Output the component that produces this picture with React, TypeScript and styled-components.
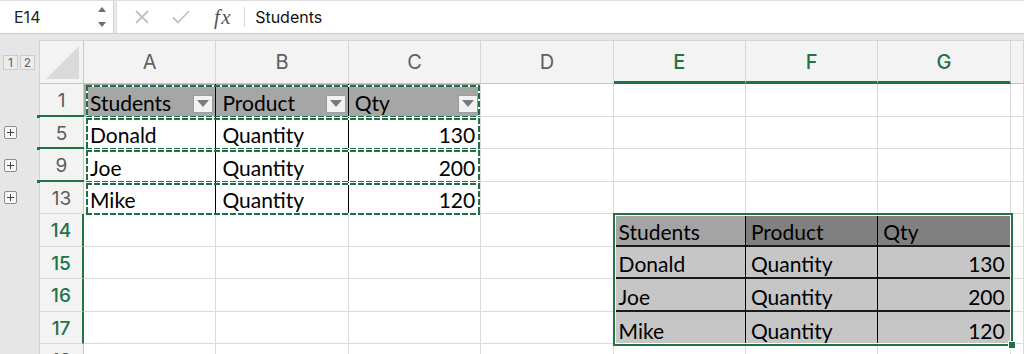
import React from "react";
import styled, { createGlobalStyle } from "styled-components";

const GREEN = "#217346";

const Global = createGlobalStyle`
  html, body { margin: 0; padding: 0; background: #fff; overflow: hidden; }
  body { width: 1024px; height: 354px; font-family: Inter, "Liberation Sans", sans-serif; }
  * { box-sizing: border-box; }
`;

const Page = styled.div`
  width: 1024px;
  height: 354px;
  overflow: hidden;
  display: flex;
  flex-direction: column;
  background: #e6e6e6;
`;

/* ---------- formula bar ---------- */
const FormulaBar = styled.div`
  flex: none;
  height: 34px;
  display: flex;
  background: #fff;
  border-top: 1px solid #dedede;
  border-bottom: 1px solid #cdcdcd;
`;

const NameBox = styled.div`
  width: 114px;
  display: flex;
  align-items: center;
  justify-content: space-between;
  padding: 0 6px 0 14px;
  border-right: 1px solid #d0d0d0;
  font-size: 16px;
  color: #222;
`;

const BarGap = styled.div`
  width: 3px;
  background: #ececec;
  border-right: 1px solid #dcdcdc;
`;

const FormulaArea = styled.div`
  flex: 1;
  display: flex;
  align-items: center;
`;

const BarIcon = styled.span<{ $ml: number }>`
  display: flex;
  align-items: center;
  margin-left: ${(p) => p.$ml}px;
`;

const Fx = styled.span`
  margin-left: 24px;
  font-family: "Liberation Serif", "DejaVu Serif", serif;
  font-style: italic;
  font-size: 21px;
  color: #555;
  letter-spacing: 1.5px;
`;

const BarDivider = styled.span`
  width: 1px;
  height: 20px;
  background: #d6d6d6;
  margin-left: 12px;
`;

const FormulaText = styled.span`
  margin-left: 10px;
  font-size: 16px;
  color: #111;
`;

const Band = styled.div`
  flex: none;
  height: 6px;
  background: #e6e6e6;
`;

/* ---------- sheet ---------- */
const Sheet = styled.div`
  flex: none;
  display: grid;
  grid-template-columns: 40px 44px repeat(7, 132.4px) 1fr;
  grid-template-rows: 44px repeat(9, 32.5px);
  background: #fff;
`;

const OutlineCell = styled.div<{ $top?: boolean }>`
  background: #e6e6e6;
  border-right: 1px solid #d2d2d2;
  display: flex;
  align-items: ${(p) => (p.$top ? "flex-start" : "center")};
  gap: 2px;
  padding: ${(p) => (p.$top ? "15px 0 0 3px" : "0 0 0 4px")};
`;

const LevelButton = styled.span`
  width: 15px;
  height: 15px;
  display: flex;
  align-items: center;
  justify-content: center;
  background: #ececec;
  border: 1px solid #cbcbcb;
  font-size: 12px;
  color: #606060;
`;

const PlusBox = styled.span`
  position: relative;
  width: 13px;
  height: 13px;
  border: 1px solid #8e8e8e;
  border-radius: 2px;
  background: #f8f8f8;
  &::before,
  &::after {
    content: "";
    position: absolute;
    background: #444;
  }
  &::before { left: 2px; right: 2px; top: 5px; height: 1px; }
  &::after { top: 2px; bottom: 2px; left: 5px; width: 1px; }
`;

const Corner = styled.div`
  background: #f3f3f3;
  border-top: 1px solid #d6d6d6;
  border-right: 1px solid #c8c8c8;
  border-bottom: 1px solid #c5c5c5;
  display: flex;
  align-items: flex-end;
  justify-content: flex-end;
  padding: 0 4px 4px 0;
`;

const CornerTriangle = styled.span`
  width: 33px;
  height: 33px;
  background: #dadada;
  clip-path: polygon(100% 0, 100% 100%, 0 100%);
`;

const ColHeader = styled.div<{ $active?: boolean }>`
  display: flex;
  align-items: center;
  justify-content: center;
  background: #f3f3f3;
  border-top: 1px solid #d6d6d6;
  border-right: 1px solid #d6d6d6;
  border-bottom: ${(p) => (p.$active ? `3px solid ${GREEN}` : "1px solid #c5c5c5")};
  padding-top: ${(p) => (p.$active ? "2px" : "0")};
  color: ${(p) => (p.$active ? GREEN : "#5e5e5e")};
  font-weight: ${(p) => (p.$active ? 500 : 400)};
  font-size: 20px;
`;

const RowHeader = styled.div<{ $active?: boolean; $split?: boolean }>`
  position: relative;
  display: flex;
  align-items: center;
  justify-content: center;
  padding-top: 2px;
  background: #f3f3f3;
  border-bottom: 1px solid #dadada;
  border-right: ${(p) => (p.$active ? `2px solid ${GREEN}` : "1px solid #c8c8c8")};
  color: ${(p) => (p.$active ? GREEN : "#5c5c5c")};
  font-weight: ${(p) => (p.$active ? 500 : 400)};
  font-size: 19px;
  &::after {
    content: "";
    display: ${(p) => (p.$split ? "block" : "none")};
    position: absolute;
    left: -3px;
    right: -2px;
    bottom: -2px;
    height: 3px;
    background: ${GREEN};
  }
`;

const Cell = styled.div`
  background: #fff;
  border-right: 1px solid #dadada;
  border-bottom: 1px solid #dadada;
`;

const CellText = styled.div`
  font-family: Lato, "Open Sans", sans-serif;
  font-size: 21px;
  line-height: 1;
  color: #000;
  display: flex;
  align-items: flex-end;
  padding-bottom: 3px;
  white-space: nowrap;
`;

/* filter table A1:C13 */
const FilterRow = styled.div`
  grid-column: span 3;
  position: relative;
  display: grid;
  grid-template-columns: repeat(3, 1fr);
`;

const FilterCell = styled(CellText)<{ $header?: boolean; $right?: boolean; $last?: boolean }>`
  background: ${(p) => (p.$header ? "#a6a6a6" : "#fff")};
  border-right: 1px solid ${(p) => (p.$last ? "#dadada" : "#000")};
  border-bottom: 1px solid #dadada;
  justify-content: ${(p) => (p.$right ? "flex-end" : "space-between")};
  padding-left: 6px;
  padding-right: ${(p) => (p.$header ? "2px" : "5px")};
`;

const DropButton = styled.span`
  width: 20px;
  height: 18px;
  display: flex;
  align-items: center;
  justify-content: center;
  background: #f2f2f2;
  border: 1px solid #9c9c9c;
  &::after {
    content: "";
    width: 0;
    height: 0;
    border-left: 6px solid transparent;
    border-right: 6px solid transparent;
    border-top: 7px solid #7a7a7a;
  }
`;

const dash = (dir: string) =>
  `repeating-linear-gradient(${dir}, #1f6f42 0 6px, #fff 6px 8px)`;

const Marquee = styled.div`
  position: absolute;
  top: 1px;
  left: 2px;
  right: 1px;
  bottom: -1px;
  pointer-events: none;
  background:
    ${dash("90deg")} left top / 100% 2px no-repeat,
    ${dash("90deg")} left bottom / 100% 2px no-repeat,
    ${dash("180deg")} left top / 2px 100% no-repeat,
    ${dash("180deg")} right top / 2px 100% no-repeat;
`;

/* pasted table E14:G17 */
const PasteBlock = styled.div`
  grid-column: 7 / 10;
  grid-row: 6 / 10;
  position: relative;
  display: grid;
  grid-template-columns: repeat(3, 1fr);
  grid-template-rows: repeat(4, 1fr);
`;

const PasteCell = styled(CellText)<{ $tone: "active" | "head" | "body"; $right?: boolean; $lastCol?: boolean; $lastRow?: boolean }>`
  background: ${(p) => (p.$tone === "active" ? "#a4a4a4" : p.$tone === "head" ? "#808080" : "#c6c6c6")};
  border-right: ${(p) => (p.$lastCol ? "none" : "1px solid #000")};
  border-bottom: ${(p) => (p.$lastRow ? "none" : "2px solid #1a1a1a")};
  justify-content: ${(p) => (p.$right ? "flex-end" : "flex-start")};
  padding-left: 5px;
  padding-right: 6px;
`;

const Selection = styled.div`
  position: absolute;
  top: -1px;
  left: -1px;
  right: -2px;
  bottom: -2px;
  border: 2px solid ${GREEN};
  box-shadow: inset 0 0 0 1px #fff;
  pointer-events: none;
`;

const FillHandle = styled.span`
  position: absolute;
  right: -5px;
  bottom: -5px;
  width: 8px;
  height: 8px;
  background: ${GREEN};
  border: 1px solid #fff;
`;

const COLS = ["A", "B", "C", "D", "E", "F", "G"];

const filterRows = [
  { n: 1, header: true, cells: ["Students", "Product", "Qty"] },
  { n: 5, header: false, cells: ["Donald", "Quantity", "130"] },
  { n: 9, header: false, cells: ["Joe", "Quantity", "200"] },
  { n: 13, header: false, cells: ["Mike", "Quantity", "120"] },
];

const pasted = [
  ["Students", "Product", "Qty"],
  ["Donald", "Quantity", "130"],
  ["Joe", "Quantity", "200"],
  ["Mike", "Quantity", "120"],
];

const Spinner = () => (
  <svg width="10" height="22" viewBox="0 0 10 22">
    <path d="M1 6 L5 1 L9 6 Z" fill="#6e6e6e" />
    <path d="M1 16 L5 21 L9 16 Z" fill="#6e6e6e" />
  </svg>
);

const CancelIcon = () => (
  <svg width="14" height="14" viewBox="0 0 14 14">
    <path d="M1 1 L13 13 M13 1 L1 13" stroke="#c2c2c2" strokeWidth="1.8" fill="none" />
  </svg>
);

const ConfirmIcon = () => (
  <svg width="18" height="14" viewBox="0 0 18 14">
    <path d="M1 7.5 L6 12.5 L17 1" stroke="#c2c2c2" strokeWidth="1.8" fill="none" />
  </svg>
);

export default function App() {
  return (
    <Page>
      <Global />
      <FormulaBar>
        <NameBox>
          E14
          <Spinner />
        </NameBox>
        <BarGap />
        <FormulaArea>
          <BarIcon $ml={18}>
            <CancelIcon />
          </BarIcon>
          <BarIcon $ml={23}>
            <ConfirmIcon />
          </BarIcon>
          <Fx>fx</Fx>
          <BarDivider />
          <FormulaText>Students</FormulaText>
        </FormulaArea>
      </FormulaBar>
      <Band />
      <Sheet>
        <OutlineCell $top>
          <LevelButton>1</LevelButton>
          <LevelButton>2</LevelButton>
        </OutlineCell>
        <Corner>
          <CornerTriangle />
        </Corner>
        {COLS.map((c) => (
          <ColHeader key={c} $active={c >= "E"}>
            {c}
          </ColHeader>
        ))}
        <ColHeader />

        {filterRows.map((r) => (
          <React.Fragment key={r.n}>
            <OutlineCell>{r.n !== 1 && <PlusBox />}</OutlineCell>
            <RowHeader $split={r.n !== 13}>{r.n}</RowHeader>
            <FilterRow>
              {r.cells.map((t, i) => (
                <FilterCell key={i} $header={r.header} $right={!r.header && i === 2} $last={i === 2}>
                  <span>{t}</span>
                  {r.header && <DropButton />}
                </FilterCell>
              ))}
              <Marquee />
            </FilterRow>
            <Cell />
            <Cell />
            <Cell />
            <Cell />
            <Cell />
          </React.Fragment>
        ))}

        <PasteBlock>
          {pasted.map((row, ri) =>
            row.map((t, ci) => (
              <PasteCell
                key={`${ri}-${ci}`}
                $tone={ri === 0 ? (ci === 0 ? "active" : "head") : "body"}
                $right={ri > 0 && ci === 2}
                $lastCol={ci === 2}
                $lastRow={ri === 3}
              >
                {t}
              </PasteCell>
            ))
          )}
          <Selection />
          <FillHandle />
        </PasteBlock>

        {[14, 15, 16, 17].map((n) => (
          <React.Fragment key={n}>
            <OutlineCell />
            <RowHeader $active>{n}</RowHeader>
            <Cell />
            <Cell />
            <Cell />
            <Cell />
            <Cell />
          </React.Fragment>
        ))}

        <OutlineCell />
        <RowHeader>18</RowHeader>
        {COLS.map((c) => (
          <Cell key={c} />
        ))}
        <Cell />
      </Sheet>
    </Page>
  );
}
